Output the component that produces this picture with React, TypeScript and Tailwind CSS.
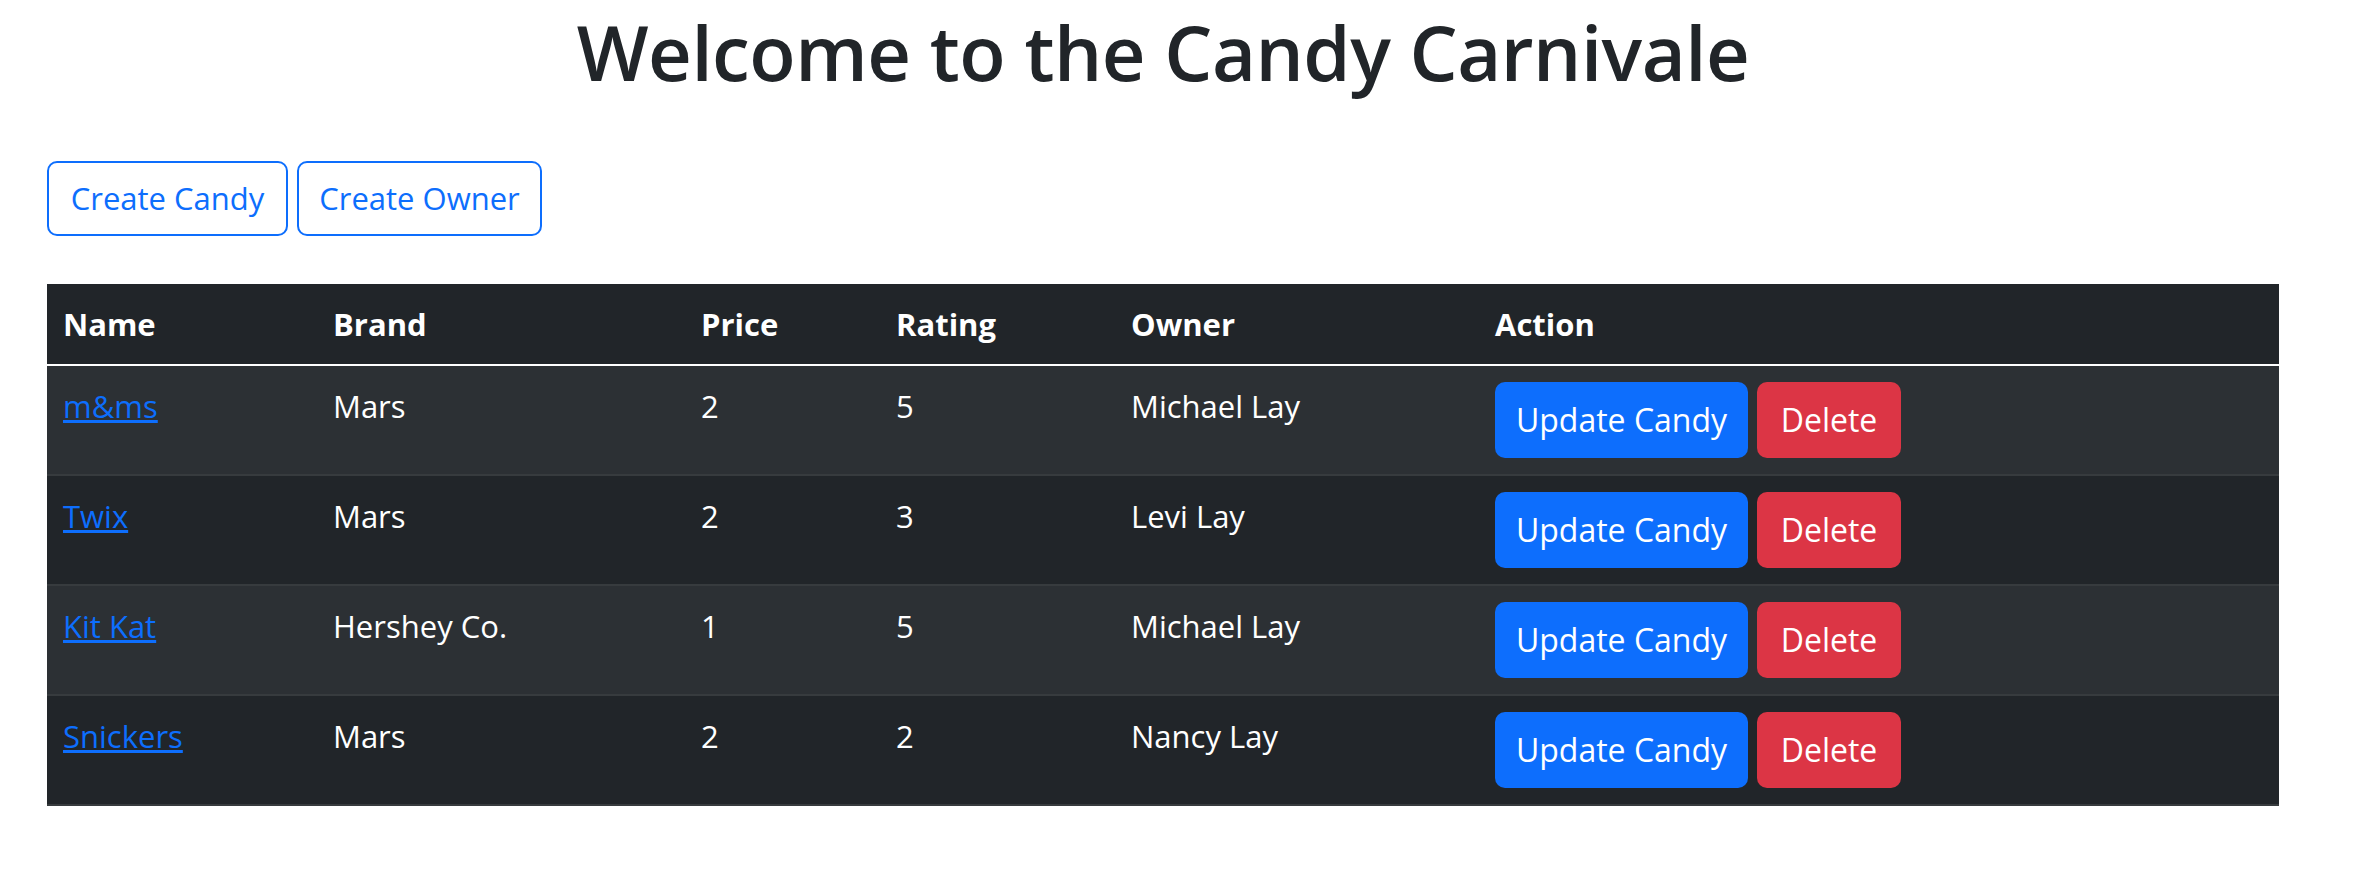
import React from 'react';

type Candy = { name: string; brand: string; price: number; rating: number; owner: string };

const candies: Candy[] = [
  { name: 'm&ms', brand: 'Mars', price: 2, rating: 5, owner: 'Michael Lay' },
  { name: 'Twix', brand: 'Mars', price: 2, rating: 3, owner: 'Levi Lay' },
  { name: 'Kit Kat', brand: 'Hershey Co.', price: 1, rating: 5, owner: 'Michael Lay' },
  { name: 'Snickers', brand: 'Mars', price: 2, rating: 2, owner: 'Nancy Lay' },
];

export default function App() {
  return (
    <div className="min-h-screen bg-white font-['Open_Sans',sans-serif] text-[#212529]">
      <div className="ml-[47px] w-[2232px]">
        <h1 className="text-center text-[76px] font-semibold leading-[100px] pt-[2px] tracking-[-0.5px]">Welcome to the Candy Carnivale</h1>

        <div className="mt-[59px] flex gap-[9px]">
          <button className="w-[241px] h-[75px] rounded-[10px] border-2 border-[#0d6efd] text-[31px] text-[#0d6efd]">Create Candy</button>
          <button className="w-[245px] h-[75px] rounded-[10px] border-2 border-[#0d6efd] text-[31px] text-[#0d6efd]">Create Owner</button>
        </div>

        <table className="mt-[48px] w-full table-fixed border-separate border-spacing-0 text-[31px] leading-[48px] text-white">
          <thead className="bg-[#212529]">
            <tr>
              <th className="w-[270px] px-4 py-4 text-left font-bold border-b-2 border-white">Name</th>
              <th className="w-[368px] px-4 py-4 text-left font-bold border-b-2 border-white">Brand</th>
              <th className="w-[195px] px-4 py-4 text-left font-bold border-b-2 border-white">Price</th>
              <th className="w-[235px] px-4 py-4 text-left font-bold border-b-2 border-white">Rating</th>
              <th className="w-[364px] px-4 py-4 text-left font-bold border-b-2 border-white">Owner</th>
              <th className="px-4 py-4 text-left font-bold border-b-2 border-white">Action</th>
            </tr>
          </thead>
          <tbody>
            {candies.map((c, i) => (
              <tr key={c.name} className={i % 2 === 0 ? 'bg-[#2c3034]' : 'bg-[#212529]'}>
                <td className="px-4 py-4 align-top border-b-2 border-[#373b3e]">
                  <a href="#" className="text-[#0d6efd] underline">{c.name}</a>
                </td>
                <td className="px-4 py-4 align-top border-b-2 border-[#373b3e]">{c.brand}</td>
                <td className="px-4 py-4 align-top border-b-2 border-[#373b3e]">{c.price}</td>
                <td className="px-4 py-4 align-top border-b-2 border-[#373b3e]">{c.rating}</td>
                <td className="px-4 py-4 align-top border-b-2 border-[#373b3e]">{c.owner}</td>
                <td className="px-4 py-4 align-top border-b-2 border-[#373b3e]">
                  <div className="flex gap-[9px]">
                    <button className="w-[253px] h-[76px] rounded-[10px] bg-[#0d6efd] text-[32px] text-white">Update Candy</button>
                    <button className="w-[144px] h-[76px] rounded-[10px] bg-[#dc3545] text-[32px] text-white">Delete</button>
                  </div>
                </td>
              </tr>
            ))}
          </tbody>
        </table>
      </div>
    </div>
  );
}
